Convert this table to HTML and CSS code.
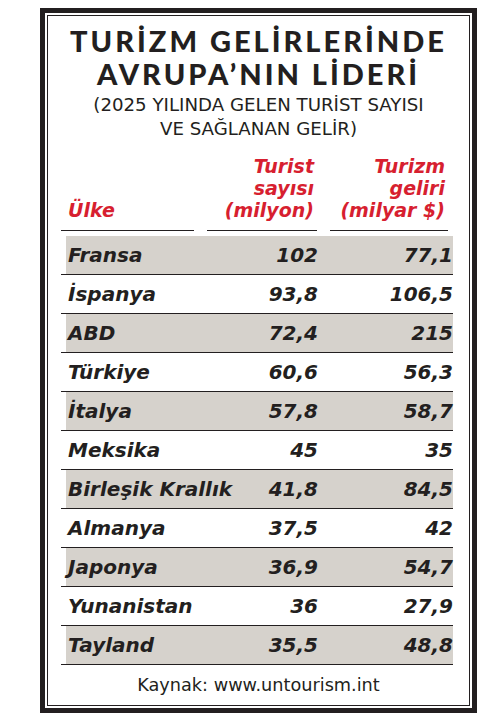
FILE: index.html
```html
<!DOCTYPE html>
<html lang="tr">
<head>
    <meta charset="UTF-8">
    <meta name="viewport" content="width=device-width, initial-scale=1.0">
    <title>Turizm Gelirlerinde Avrupa'nın Lideri</title>
    <link rel="stylesheet" href="styles.css">
</head>
<body>
    <div class="frame">
        <div class="inner">
            <h1 class="title">TURİZM GELİRLERİNDE<br>AVRUPA’NIN LİDERİ</h1>
            <p class="subtitle">(2025 YILINDA GELEN TURİST SAYISI<br>VE SAĞLANAN GELİR)</p>
            <div class="table">
                <div class="head">
                    <div class="head-cell country">Ülke</div>
                    <div class="head-cell num">Turist<br>sayısı<br>(milyon)</div>
                    <div class="head-cell num">Turizm<br>geliri<br>(milyar $)</div>
                </div>
                <div class="row shaded"><span>Fransa</span><span>102</span><span>77,1</span></div>
                <div class="row"><span>İspanya</span><span>93,8</span><span>106,5</span></div>
                <div class="row shaded"><span>ABD</span><span>72,4</span><span>215</span></div>
                <div class="row"><span>Türkiye</span><span>60,6</span><span>56,3</span></div>
                <div class="row shaded"><span>İtalya</span><span>57,8</span><span>58,7</span></div>
                <div class="row"><span>Meksika</span><span>45</span><span>35</span></div>
                <div class="row shaded"><span>Birleşik Krallık</span><span>41,8</span><span>84,5</span></div>
                <div class="row"><span>Almanya</span><span>37,5</span><span>42</span></div>
                <div class="row shaded"><span>Japonya</span><span>36,9</span><span>54,7</span></div>
                <div class="row"><span>Yunanistan</span><span>36</span><span>27,9</span></div>
                <div class="row shaded"><span>Tayland</span><span>35,5</span><span>48,8</span></div>
            </div>
            <p class="source">Kaynak: www.untourism.int</p>
        </div>
    </div>
</body>
</html>
```

FILE: styles.css
```css
body {
    margin: 0;
    background: #fff;
    color: #231f20;
    font-family: "DejaVu Sans", sans-serif;
}
.frame {
    width: 437px;
    height: 705px;
    box-sizing: border-box;
    margin: 8px 0 0 40px;
    border: 5px solid #231f20;
    padding: 2px;
}
.inner {
    height: 100%;
    box-sizing: border-box;
    border: 1px solid #231f20;
    padding-top: 8px;
}
.title {
    margin: 0;
    text-align: center;
    font-family: Lato, sans-serif;
    font-size: 29px;
    line-height: 33px;
    font-weight: 900;
    letter-spacing: 3px;
}
.subtitle {
    margin: 3px 0 0;
    text-align: center;
    font-size: 18.2px;
    line-height: 24px;
}
.table {
    margin: 14px 16px 0 13px;
    font-style: italic;
    font-weight: 700;
    font-size: 20px;
}
.head {
    display: grid;
    grid-template-columns: 133px 110px 118px;
    column-gap: 13px;
    width: 387px;
    color: #d71f30;
    font-size: 19px;
    line-height: 22px;
    margin-bottom: 5px;
}
.head-cell {
    border-bottom: 1px solid #231f20;
    padding-bottom: 9px;
    white-space: nowrap;
}
.head-cell.country {
    display: flex;
    align-items: flex-end;
    padding-left: 7px;
}
.head-cell.num {
    text-align: right;
    padding-right: 3px;
}
.row {
    display: grid;
    grid-template-columns: 132px 120px 1fr;
    height: 38px;
    line-height: 38px;
    padding-left: 5px;
    border-bottom: 1px solid #231f20;
    background-clip: content-box;
    white-space: nowrap;
}
.row.shaded {
    background-color: #d6d2cc;
}
.row span {
    text-align: right;
}
.row span:first-child {
    text-align: left;
    padding-left: 2px;
}
.source {
    margin: 8px 0 0;
    text-align: center;
    font-size: 17.7px;
    line-height: 24px;
}
```
